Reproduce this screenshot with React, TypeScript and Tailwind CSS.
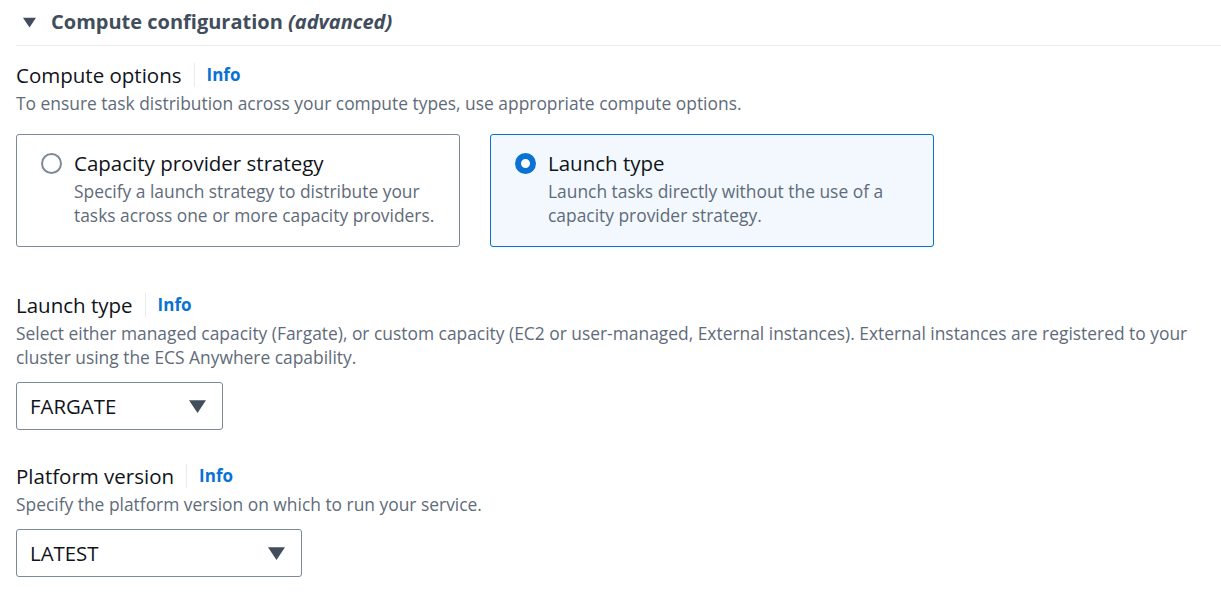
import React, { useState } from "react";

const Caret = ({ className }: { className?: string }) => (
  <svg viewBox="0 0 16 12" className={className} fill="currentColor">
    <path d="M0 0 H16 L8 12 Z" />
  </svg>
);

const FieldLabel = ({ label }: { label: string }) => (
  <div className="flex items-center h-6">
    <span className="text-[20.5px] text-[#0f141a]">{label}</span>
    <span className="mx-3 h-6 w-px bg-[#e9ebed]" />
    <a className="text-[17px] font-bold text-[#0972d3]">Info</a>
  </div>
);

const SelectBox = ({ value, width }: { value: string; width: string }) => (
  <div
    className={`mt-[13px] flex h-[48px] ${width} items-center justify-between rounded-[3px] border border-[#7d8998] pl-[13px] pr-[16px]`}
  >
    <span className="text-[20.4px] text-[#0f141a]">{value}</span>
    <Caret className="h-[13px] w-[17px] text-[#414d5c]" />
  </div>
);

export default function App() {
  const [choice, setChoice] = useState<"capacity" | "launch">("launch");

  const cards = [
    {
      id: "capacity" as const,
      title: "Capacity provider strategy",
      desc: ["Specify a launch strategy to distribute your", "tasks across one or more capacity providers."],
    },
    {
      id: "launch" as const,
      title: "Launch type",
      desc: ["Launch tasks directly without the use of a", "capacity provider strategy."],
    },
  ];

  return (
    <div className="min-h-screen bg-white font-['Open_Sans',sans-serif] text-[17.4px] leading-6">
      {/* Section header */}
      <div className="flex items-center pl-[23px] pt-[10px] pb-[11px]">
        <Caret className="h-[11px] w-[13px] text-[#414d5c]" />
        <h2 className="ml-[15px] text-[20px] font-bold text-[#414d5c]">
          Compute configuration <i>(advanced)</i>
        </h2>
      </div>
      <div className="ml-4 h-px bg-[#e9ebed]" />

      <div className="px-4 pt-[17px]">
        {/* Compute options */}
        <FieldLabel label="Compute options" />
        <p className="mt-1 text-[#5f6b7a]">
          To ensure task distribution across your compute types, use appropriate compute options.
        </p>

        <div className="mt-[19px] flex gap-[30px]">
          {cards.map((c) => {
            const active = choice === c.id;
            return (
              <button
                key={c.id}
                onClick={() => setChoice(c.id)}
                className={`flex h-[113px] w-[444px] items-start rounded-[3px] border pt-[16px] pl-6 text-left ${
                  active ? "border-[#0972d3] bg-[#f2f8fd]" : "border-[#7d8998] bg-white"
                }`}
              >
                {active ? (
                  <span className="mt-[2px] h-[21px] w-[21px] shrink-0 rounded-full border-[6px] border-[#0972d3] bg-white" />
                ) : (
                  <span className="mt-[2px] h-[21px] w-[21px] shrink-0 rounded-full border-2 border-[#7d8998] bg-white" />
                )}
                <div className="ml-[12px]">
                  <div className="text-[20.5px] text-[#0f141a]">{c.title}</div>
                  <div className="mt-[4px] text-[#5f6b7a]">
                    {c.desc.map((d) => (
                      <div key={d}>{d}</div>
                    ))}
                  </div>
                </div>
              </button>
            );
          })}
        </div>

        {/* Launch type */}
        <div className="mt-[46px]">
          <FieldLabel label="Launch type" />
          <p className="mt-1 text-[#5f6b7a]">
            Select either managed capacity (Fargate), or custom capacity (EC2 or user-managed, External instances). External instances are registered to your
            <br />
            cluster using the ECS Anywhere capability.
          </p>
          <SelectBox value="FARGATE" width="w-[207px]" />
        </div>

        {/* Platform version */}
        <div className="mt-[34px]">
          <FieldLabel label="Platform version" />
          <p className="mt-1 text-[#5f6b7a]">Specify the platform version on which to run your service.</p>
          <SelectBox value="LATEST" width="w-[286px]" />
        </div>
      </div>
    </div>
  );
}
